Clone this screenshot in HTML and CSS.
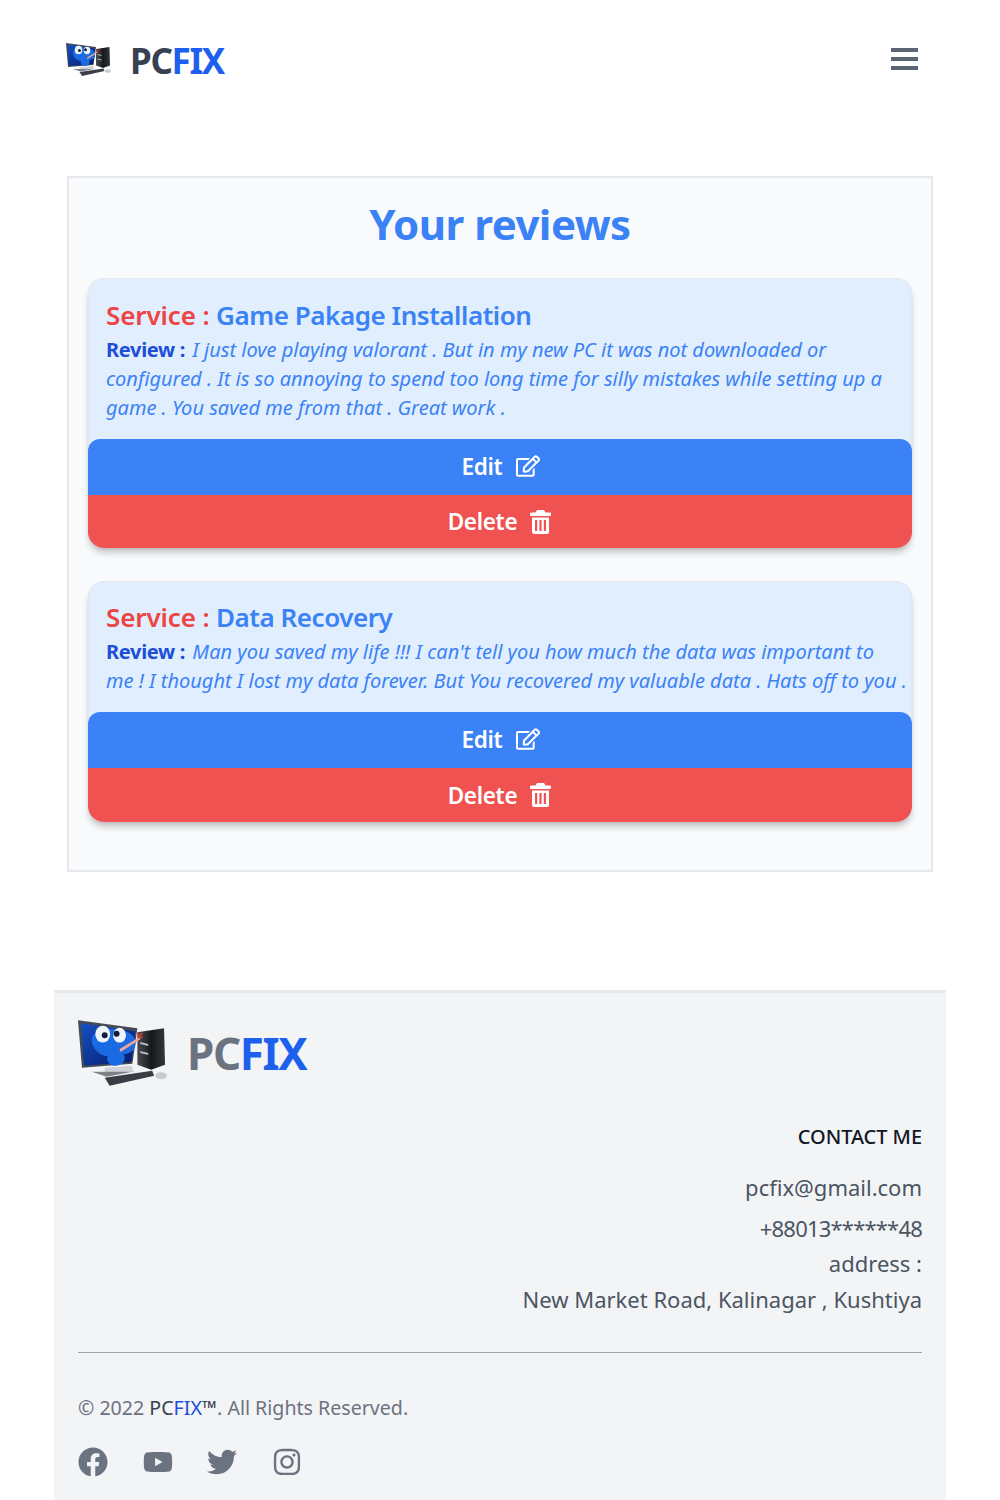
FILE: index.html
```html
<!DOCTYPE html>
<html lang="en">
<head>
<meta charset="utf-8">
<title>PCFIX - Your reviews</title>
<link rel="stylesheet" href="styles.css">
</head>
<body>
<svg class="defs" width="0" height="0" aria-hidden="true">
  <defs>
    <linearGradient id="screen" x1="0" y1="0" x2="1" y2="1"><stop offset="0" stop-color="#1450c0"/><stop offset="1" stop-color="#051a6a"/></linearGradient>
    <linearGradient id="tower" x1="0" y1="0" x2="1" y2="0"><stop offset="0" stop-color="#4a4d52"/><stop offset=".5" stop-color="#17181b"/><stop offset="1" stop-color="#33363a"/></linearGradient>
    <symbol id="logo" viewBox="0 0 92 68">
      <path d="M60 14l27-4 1 37-14 5-14-5z" fill="url(#tower)"/>
      <path d="M63 24l8 2v2l-8-2zM63 33l8 2v2l-8-2z" fill="#b9bdc2"/>
      <path d="M0 2l60 8-5 36-51 4z" fill="#454b55"/>
      <path d="M3 5l55 8-4 31-48 4z" fill="url(#screen)"/>
      <path d="M27 50l27-2 3 6-30 2z" fill="#cfd3d8"/>
      <path d="M14 54l41 0-26 5z" fill="#7c8188"/>
      <path d="M27 60l48-7 2 5-45 10z" fill="#3a3e44"/>
      <ellipse cx="84" cy="58" rx="6" ry="3.5" fill="#c8ccd0"/>
      <path d="M14 20c2-12 38-14 44 2 2 10-6 14-12 14 4 6-2 12-8 12-6 0-10-5-8-10-8 0-17-8-16-18z" fill="#1a6ae4"/>
      <ellipse cx="25" cy="16" rx="7.5" ry="8.5" fill="#eef4fb"/>
      <ellipse cx="42" cy="17" rx="6.5" ry="7.5" fill="#eef4fb"/>
      <circle cx="27" cy="17" r="3" fill="#10203c"/>
      <circle cx="39" cy="15.500" r="3" fill="#10203c"/>
      <path d="M42 31l20-12 1 2-20 13z" fill="#f0a596"/>
      <path d="M60 15l5 5m0-5l-5 5" stroke="#d23c2e" stroke-width="1.600"/>
    </symbol>
    <symbol id="edit" viewBox="0 0 576 512"><path fill="currentColor" d="M402.3 344.9l32-32c5-5 13.7-1.5 13.7 5.7V464c0 26.5-21.5 48-48 48H48c-26.5 0-48-21.5-48-48V112c0-26.5 21.5-48 48-48h273.5c7.1 0 10.7 8.6 5.7 13.7l-32 32c-1.5 1.5-3.5 2.3-5.7 2.3H48v352h352V350.5c0-2.1.8-4.1 2.3-5.6zm156.6-201.8L296.3 405.7l-90.4 10c-26.2 2.9-48.5-19.2-45.6-45.6l10-90.4L432.9 17.1c22.9-22.9 59.9-22.9 82.7 0l43.2 43.2c22.9 22.9 22.9 60 .1 82.8zM460.1 174L402 115.9 216.2 301.8l-7.3 65.3 65.3-7.3L460.1 174zm64.8-79.7l-43.2-43.2c-4.1-4.1-10.8-4.1-14.8 0L436 82l58.1 58.1 30.9-30.9c4-4.2 4-10.8-.1-14.9z"/></symbol>
    <symbol id="trash" viewBox="0 0 21 24"><path fill="currentColor" fill-rule="evenodd" d="M7 0h7l1.500 2.500H20a1 1 0 0 1 1 1V5a1 1 0 0 1-1 1H1a1 1 0 0 1-1-1V3.500a1 1 0 0 1 1-1h4.500zM2 7.500h17V22a2 2 0 0 1-2 2H4a2 2 0 0 1-2-2zM5 10v11h2.200V10zM9.400 10v11h2.200V10zM13.800 10v11H16V10z"/></symbol>
  </defs>
</svg>

<header class="navbar">
  <a class="brand" href="#">
    <svg class="brand-img"><use href="#logo"/></svg>
    <span class="brand-name">PC<span class="fix">FIX</span></span>
  </a>
  <button class="menu" aria-label="Menu"><span></span><span></span><span></span></button>
</header>

<main class="reviews">
  <h1 class="reviews-title">Your reviews</h1>

  <article class="review review-long">
    <div class="review-body">
      <h2 class="service"><span class="service-label">Service :</span> Game Pakage Installation</h2>
      <p class="review-text"><b>Review :</b> <i>I just love playing valorant . But in my new PC it was not downloaded or configured . It is so annoying to spend too long time for silly mistakes while setting up a game . You saved me from that . Great work .</i></p>
    </div>
    <button class="btn btn-edit">Edit <svg class="btn-icon edit-icon"><use href="#edit"/></svg></button>
    <button class="btn btn-delete">Delete <svg class="btn-icon trash-icon"><use href="#trash"/></svg></button>
  </article>

  <article class="review review-short">
    <div class="review-body">
      <h2 class="service"><span class="service-label">Service :</span> Data Recovery</h2>
      <p class="review-text"><b>Review :</b> <i>Man you saved my life !!! I can't tell you how much the data was important to me&nbsp;! I thought I lost my data forever. But You recovered my valuable data . Hats off to you&nbsp;.</i></p>
    </div>
    <button class="btn btn-edit">Edit <svg class="btn-icon edit-icon"><use href="#edit"/></svg></button>
    <button class="btn btn-delete">Delete <svg class="btn-icon trash-icon"><use href="#trash"/></svg></button>
  </article>
</main>

<footer class="footer">
  <a class="footer-brand" href="#">
    <svg class="footer-img"><use href="#logo"/></svg>
    <span class="footer-name">PC<span class="fix">FIX</span></span>
  </a>
  <div class="contact">
    <h3 class="contact-title">CONTACT ME</h3>
    <p class="contact-mail">pcfix@gmail.com</p>
    <p class="contact-phone">+88013******48</p>
    <p class="contact-line">address :</p>
    <p class="contact-line">New Market Road, Kalinagar , Kushtiya</p>
  </div>
  <hr class="rule">
  <p class="copyright">© 2022 <span class="dark">PC</span><span class="blue">FIX</span><span class="dark">™</span>. All Rights Reserved.</p>
  <div class="social">
    <svg class="social-icon" viewBox="0 0 512 512"><path fill="currentColor" d="M504 256C504 119 393 8 256 8S8 119 8 256c0 123.780 90.690 226.380 209.250 245V327.690h-63V256h63v-54.640c0-62.150 37-96.480 93.670-96.480 27.140 0 55.520 4.840 55.520 4.840v61h-31.280c-30.800 0-40.410 19.120-40.410 38.730V256h68.780l-11 71.690h-57.780V501C413.310 482.380 504 379.780 504 256z"/></svg>
    <svg class="social-icon" viewBox="0 0 576 512"><path fill="currentColor" d="M549.655 124.083c-6.281-23.650-24.787-42.276-48.284-48.597C458.781 64 288 64 288 64S117.220 64 74.629 75.486c-23.497 6.322-42.003 24.947-48.284 48.597-11.412 42.867-11.412 132.305-11.412 132.305s0 89.438 11.412 132.305c6.281 23.650 24.787 41.500 48.284 47.821C117.220 448 288 448 288 448s170.780 0 213.371-11.486c23.497-6.321 42.003-24.171 48.284-47.821 11.412-42.867 11.412-132.305 11.412-132.305s0-89.438-11.412-132.305zm-317.510 213.508V175.185l142.739 81.205-142.739 81.201z"/></svg>
    <svg class="social-icon" viewBox="0 0 512 512"><path fill="currentColor" d="M459.370 151.716c.325 4.548.325 9.097.325 13.645 0 138.720-105.583 298.558-298.558 298.558-59.452 0-114.680-17.219-161.137-47.106 8.447.974 16.568 1.299 25.340 1.299 49.055 0 94.213-16.568 130.274-44.832-46.132-.975-84.792-31.188-98.112-72.772 6.498.974 12.995 1.624 19.818 1.624 9.421 0 18.843-1.300 27.614-3.573-48.081-9.747-84.143-51.980-84.143-102.985v-1.299c13.969 7.797 30.214 12.670 47.431 13.319-28.264-18.843-46.781-51.005-46.781-87.391 0-19.492 5.197-37.360 14.294-52.954 51.655 63.675 129.300 105.258 216.365 109.807-1.624-7.797-2.599-15.918-2.599-24.040 0-57.828 46.782-104.934 104.934-104.934 30.213 0 57.502 12.670 76.670 33.137 23.715-4.548 46.456-13.320 66.599-25.340-7.798 24.366-24.366 44.833-46.132 57.827 21.117-2.273 41.584-8.122 60.426-16.243-14.292 20.791-32.161 39.308-52.628 54.253z"/></svg>
    <svg class="social-icon" viewBox="0 0 448 512"><path fill="currentColor" d="M224.100 141c-63.600 0-114.900 51.300-114.900 114.900s51.300 114.900 114.900 114.900S339 319.500 339 255.900 287.700 141 224.100 141zm0 189.600c-41.100 0-74.700-33.500-74.700-74.700s33.500-74.700 74.700-74.700 74.700 33.500 74.700 74.700-33.600 74.700-74.700 74.700zm146.400-194.300c0 14.900-12 26.800-26.800 26.800-14.900 0-26.800-12-26.800-26.800s12-26.800 26.800-26.800 26.800 12 26.800 26.800zm76.100 27.200c-1.700-35.900-9.900-67.700-36.200-93.900-26.200-26.200-58-34.400-93.900-36.200-37-2.100-147.900-2.100-184.900 0-35.800 1.700-67.600 9.900-93.900 36.100s-34.400 58-36.200 93.900c-2.100 37-2.100 147.900 0 184.900 1.700 35.900 9.900 67.700 36.200 93.900s58 34.400 93.900 36.200c37 2.100 147.900 2.100 184.900 0 35.900-1.700 67.700-9.900 93.900-36.200 26.200-26.200 34.400-58 36.200-93.900 2.100-37 2.100-147.800 0-184.800zM398.800 388c-7.800 19.600-22.900 34.700-42.600 42.600-29.500 11.700-99.500 9-132.100 9s-102.700 2.600-132.100-9c-19.600-7.800-34.700-22.900-42.600-42.600-11.700-29.500-9-99.500-9-132.100s-2.600-102.700 9-132.100c7.800-19.600 22.900-34.700 42.600-42.600 29.500-11.700 99.500-9 132.100-9s102.700-2.600 132.100 9c19.600 7.800 34.700 22.900 42.600 42.600 11.700 29.500 9 99.500 9 132.100s2.700 102.700-9 132.100z"/></svg>
  </div>
</footer>
</body>
</html>
```
FILE: styles.css
```css
* { box-sizing: border-box; }
html, body { margin: 0; padding: 0; }
body { width: 1000px; height: 1500px; overflow: hidden; background: #fff; font-family: "Noto Sans", "Open Sans", sans-serif; }
.defs { position: absolute; }
p, h1, h2, h3 { margin: 0; }
a { text-decoration: none; color: inherit; }

.navbar { display: flex; justify-content: space-between; align-items: center; height: 120px; padding: 0 82px 0 66px; }
.brand { display: flex; align-items: center; gap: 18px; }
.brand-img { width: 46px; height: 34px; filter: blur(.3px); margin-top: -3px; }
.brand-name { font-size: 35px; font-weight: 700; color: #374151; line-height: 40px; letter-spacing: -1.300px; margin-top: 2px; }
.fix { color: #1d60ee; }
.menu { display: flex; flex-direction: column; gap: 5px; width: 27px; padding: 0; border: 0; background: none; margin-bottom: 2px; }
.menu span { display: block; height: 4px; background: #5b6473; }

.reviews { margin: 56px 67px 0 67px; height: 696px; padding: 0 19px; background: #f9fafb; border: 2px solid #e5e7eb; }
.reviews-title { height: 100px; padding-top: 18px; text-align: center; font-size: 42px; line-height: 56px; font-weight: 700; color: #3b82f6; letter-spacing: -.5px; }
.review { margin-bottom: 33px; border: 1px solid #e5e7eb; border-bottom: 0; border-radius: 16px; background: #e0eefe; box-shadow: 0 6px 7px -1px rgba(0,0,0,.2), 0 2px 4px -2px rgba(0,0,0,.15); }
.review-body { padding: 16px 3px 0 17px; }
.review-long .review-body { height: 160px; }
.review-short .review-body { height: 130px; padding-top: 15px; }
.service { font-size: 26px; line-height: 40px; font-weight: 600; color: #3b82f6; letter-spacing: -.45px; }
.service-label { color: #ef4444; letter-spacing: -.1px; }
.review-text { font-size: 20px; line-height: 29px; color: #3b82f6; }
.review-text b { color: #1d4ed8; font-weight: 700; letter-spacing: -.3px; margin-right: 2px; }
.btn { display: flex; justify-content: center; align-items: center; gap: 12px; width: calc(100% + 2px); margin: 0 -1px; border: 0; padding: 0; color: #fff; font: 600 22.500px "Noto Sans", sans-serif; letter-spacing: -.3px; }
.btn-edit { height: 56px; padding-bottom: 2px; background: #3b82f6; border-radius: 12px 12px 0 0; }
.btn-delete { height: 53px; background: #f05252; border-radius: 0 0 16px 16px; }
.review-short .btn-delete { height: 54px; }
.btn-icon { display: block; color: #fff; }
.edit-icon { width: 24px; height: 22px; margin: 0 -2px 0 2px; }
.trash-icon { width: 21px; height: 24px; margin: 0 1px; }

.footer { margin: 118px 54px 0; height: 510px; padding: 24px 24px 0 24px; background: #f3f4f6; border-top: 3px solid #e5e7eb; }
.footer-brand { display: flex; align-items: center; gap: 18px; height: 70px; }
.footer-img { width: 91px; height: 68px; filter: blur(.4px); }
.footer-name { font-size: 44px; line-height: 60px; font-weight: 700; color: #6b7280; letter-spacing: -1.400px; margin-top: 2px; }
.contact { margin-top: 36px; text-align: right; color: #4b5563; font-size: 22px; }
.contact-title { font-size: 20px; line-height: 28px; font-weight: 500; color: #111827; margin-bottom: 20px; letter-spacing: -.05px; }
.contact-mail { line-height: 32px; margin-bottom: 9px; }
.contact-phone { line-height: 32px; margin-bottom: 2px; letter-spacing: -.8px; }
.contact-line { line-height: 35.500px; }
.rule { margin: 35px 0 0; border: 0; border-top: 1px solid #9ca3af; }
.copyright { margin-top: 40px; font-size: 19.600px; line-height: 30px; color: #6b7280; }
.dark { color: #374151; }
.blue { color: #1d4ed8; }
.social { display: flex; align-items: center; gap: 34.500px; margin-top: 24px; color: #6b7280; }
.social-icon { display: block; width: 30px; height: 30px; }
```
